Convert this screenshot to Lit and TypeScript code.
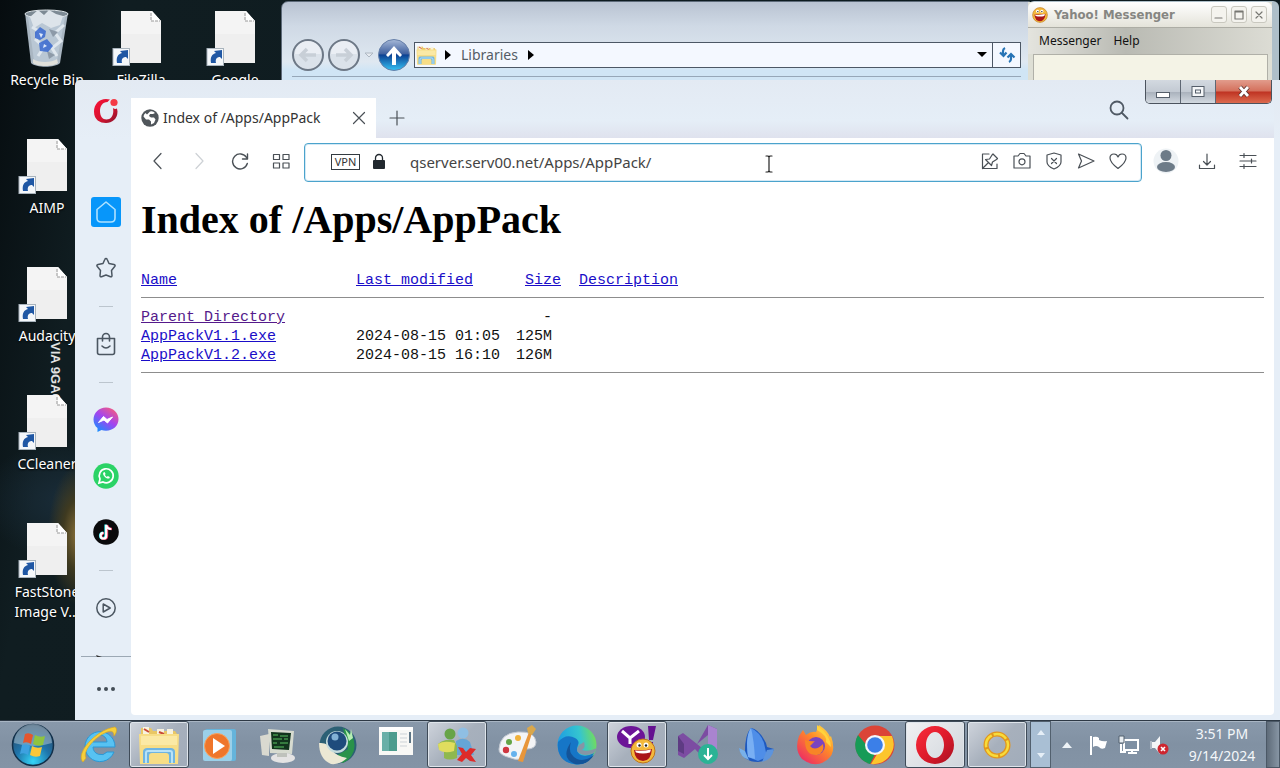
import { LitElement, html, css, svg, nothing } from "lit";
import { customElement, state } from "lit/decorators.js";
import { classMap } from "lit/directives/class-map.js";

const icon = (w: number, h: number, body: unknown, box = `0 0 ${w} ${h}`) =>
  html`<svg width=${w} height=${h} viewBox=${box} fill="none" aria-hidden="true">${body}</svg>`;

/* ---- desktop ---- */
const documentIcon = icon(60, 58, svg`
  <path d="M10 1h31l9 10v42H10z" fill="#f4f4f4"/>
  <path d="M10 24h40v29H10z" fill="#ebebeb" opacity=".6"/>
  <path d="M41 1l9 10h-9z" fill="#fff"/>
  <path d="M40 3v8h9" stroke="#999" stroke-dasharray="3 1"/>
  <rect x="2" y="38.500" width="16.500" height="17" fill="#f4f7fa" stroke="#a9b4bd"/>
  <path d="M6 53c-1-6 1-9 5-10l-2-2 8-1v9l-2-2c-3 0-5 2-4 6z" fill="#1f57a4"/>`);

const recycleBin = icon(50, 60, svg`
  <path d="M3 4l6 50c5 5 24 5 29 0l8-50z" fill="#a9b6c2"/>
  <path d="M6 8l6 44c5 4 19 4 23 0l8-44z" fill="#b9c7d4"/>
  <ellipse cx="24.500" cy="5" rx="21.500" ry="4" fill="#7d8a94" stroke="#dfe6ea"/>
  <path d="M8 8l8-7 6 5 5-5 7 4 7 2-3 9-9 3-9-5-8 5z" fill="#dde4ea"/>
  <path d="M10 18l8 5-4 8 8 7-6 9M42 16l-9 8 6 8-9 7 5 8" stroke="#dfe7ee" stroke-width="3"/>
  <path d="M27 20l9 3-5 5zM25 42l8 4-6 4z" fill="#8d9aa8"/>
  <path d="M13 23l5-5 6 4-1 6-5 3-5-2zM17 34l8-4 6 7-5 6-8-1z" fill="#3767cf" opacity=".85"/>
  <path d="M17 24l4 1-2 4zM22 35l3 2-4 2z" fill="#dce8fb"/>
  <path d="M11 50c5 4 19 4 24 0l1 4c-5 4-21 4-25 0z" fill="#e0e0da"/>`);

/* ---- explorer ---- */
const circleArrow = (d: string) => icon(32, 32, svg`
  <circle cx="16" cy="16" r="15" fill="#dbe2ea" stroke="#6d7886" stroke-width="2"/>
  <path d="M3 15a13 13 0 0 1 26 0z" fill="#f1f4f8" opacity=".7"/>
  <path d=${d} stroke="#c8cfd7" stroke-width="3.500"/>`);
const upArrow = icon(32, 32, svg`
  <defs><linearGradient id="up" x1="0" y1="0" x2="0" y2="1">
    <stop offset="0" stop-color="#a7b9d8"/><stop offset=".46" stop-color="#40619f"/>
    <stop offset=".5" stop-color="#0b4193"/><stop offset="1" stop-color="#35c3f5"/></linearGradient></defs>
  <circle cx="16" cy="16" r="15.500" fill="url(#up)" stroke="#667fa8"/>
  <path d="M16 7l8 9-2 2-4-4v12h-4V14l-4 4-2-2z" fill="#fff"/>`);
const folderArt = svg`
  <path d="M2 3h10l2 3h22l2 3v30H2z" fill="#e9c765"/>
  <path d="M4 2h6v8H4zM18 4h7v8h-7zM28 4h6v8h-6z" fill="#f8f3df"/>
  <path d="M5 4l5 3M20 7l5 2" stroke="#c94a37" stroke-width="2"/>
  <path d="M0 9h40l-1 30H1z" fill="#f7dd86"/>
  <path d="M2 11h36v9H2z" fill="#fbe9a5"/>
  <path d="M4 38V27c0-3 2-4 4-4h24c2 0 4 1 4 4v11h-6v-7c0-2-1-3-3-3H13c-2 0-3 1-3 3v7z" fill="#6fb5e2"/>
  <path d="M7 38V28c0-1 1-2 2-2h22c1 0 2 1 2 2v10" stroke="#b8e2f7" stroke-width="2"/>`;

/* ---- browser ---- */
const operaSmall = icon(26, 26, svg`
  <defs><linearGradient id="os" x1="0" y1="0" x2="1" y2="1">
    <stop offset="0" stop-color="#fb1238"/><stop offset=".6" stop-color="#d0142f"/><stop offset="1" stop-color="#85142c"/></linearGradient></defs>
  <path fill-rule="evenodd" d="M17 1.500C8 -1 1 5 1 13.500s6 11.500 12 11.500 11.500-4 11.500-11.500l-.5-3q-2 1-4-.5l.3 3c0 5-2.800 8.500-6.800 8.500s-6.500-3.500-6.500-8.500S9.500 4 14.500 4q1-1.500 2.500-2.500z" fill="url(#os)"/>
  <circle cx="21" cy="4.500" r="3.600" fill="#f43a45"/>`);
const line = (w: number, h: number, d: string, sw = 1.2, color = "#4a5056") =>
  icon(w, h, svg`<path d=${d} stroke=${color} stroke-width=${sw} stroke-linejoin="round" stroke-linecap="round"/>`);

const globe = icon(18, 18, svg`<circle cx="9" cy="9" r="8.700" fill="#50565b"/>
  <path d="M9 2.500q3-1 5 1.500l-2 1-3 0-1 2 2 1.500 3 0 1.500 2-1.500 3.500-3 1.500 0-3-2-2-3 0-2.500-3q0-2 2-3.500l1.500 1.500z" fill="#fff"/>`);
const lock = icon(14, 17, svg`<rect x="1" y="7" width="12" height="9" rx="1" fill="#22292f"/>
  <path d="M3.500 7V5a3.500 3.500 0 0 1 7 0v2" stroke="#22292f" stroke-width="1.300"/>`);
const house = line(22, 22, "M2 8.500L11 1l9 7.500V17q0 4-4 4H6q-4 0-4-4z", 1.600, "#aee2ff");
const star = line(22, 22, "M11 1.500q.8 0 1.200 1l1.800 4 5 1q1.800.5.700 2l-3.200 4 .5 5q0 1.500-1.500 1.200l-4.500-1.700-4.500 1.700q-1.500.3-1.500-1.200l.5-5-3.200-4q-1.100-1.500.7-2l5-1 1.800-4q.4-1 1.200-1z", 1.500, "#4b5661");
const bag = line(20, 24, "M1.500 6.500h17v14q0 2-2 2h-13q-2 0-2-2zM6.500 9V5a3.500 3.500 0 0 1 7 0v4M6 14q4 4 8 0", 1.600, "#4b5661");
const messenger = icon(26, 26, svg`
  <defs><linearGradient id="ms" x1=".9" y1="0" x2=".2" y2="1"><stop offset="0" stop-color="#ff5e72"/>
   <stop offset=".5" stop-color="#a344f0"/><stop offset="1" stop-color="#168fff"/></linearGradient></defs>
  <path d="M13 .5C6 .5.500 5.600.500 12.400c0 3.600 1.500 6.500 4 8.600v4l4-2q2 .8 4.500.8c7 0 12.500-5 12.500-11.500S20 .5 13 .5z" fill="url(#ms)"/>
  <path d="M5.500 15.500l5-6 3.500 3 5.500-2.500-5 6-3.500-3z" fill="#fff" stroke="#fff"/>`);
const whatsapp = icon(26, 26, svg`<circle cx="13" cy="13" r="12.700" fill="#2bd366"/>
  <path d="M6 20l1-4a7 7 0 1 1 3 3z" stroke="#fff" stroke-width="1.700"/>
  <path d="M10.500 9.500c-2 2 3.500 7.500 6 5.800l.3-1.300-2-1-1 1-2-2 .8-1-1-2z" fill="#fff"/>`);
const tiktok = icon(26, 26, svg`<circle cx="13" cy="13" r="12.800" fill="#0a0a0c"/>
  <path d="M12.500 5.500v11a2.700 2.700 0 1 1-2.700-2.700M12.500 6q1 4 5 4" stroke="#26e0e6" stroke-width="2.400"/>
  <path d="M14 6v11a2.900 2.900 0 1 1-2.900-2.900M14 6q1 4 5 4" stroke="#f43a63" stroke-width="2.400"/>
  <path d="M13.200 5.700v11a2.800 2.800 0 1 1-2.800-2.800M13.200 6q1 4 5 4" stroke="#fff" stroke-width="2.200"/>`);
const player = line(20, 20, "M10 .8a9.200 9.200 0 1 1 0 18.400a9.200 9.200 0 1 1 0-18.400zM7.200 6v8l7-4z", 1.500, "#4b5661");

const addressTools: [string, unknown][] = [
  ["Pin to board", line(18, 18, "M8 2H1.500v14.500H16V12M1.500 16.500l5.500-5.500M4.500 7.500l6 6 1-3.500 4-2.500 1-1-4.500-4.500-1 1-2.500 4z")],
  ["Snapshot", line(18, 18, "M1 4h4l2-2.500h4L13 4h4v12H1zM9 6.800a3 3 0 1 1 0 6a3 3 0 1 1 0-6z")],
  ["Ad blocker", line(18, 18, "M9 1l7 2v7q0 4-7 7-7-3-7-7V3zM6.500 6.500l5 5M11.500 6.500l-5 5")],
  ["Send to My Flow", line(18, 18, "M1.500 2L17 9 1.500 16 4.500 9z")],
  ["Bookmark", line(18, 18, "M9 16.500Q1 10.500 1 6q0-4 4-4 3 0 4 3 1-3 4-3 4 0 4 4 0 4.500-8 10.500z")],
];
const profile = icon(26, 26, svg`<circle cx="13" cy="13" r="12.500" fill="#eef2f5"/>
  <circle cx="13" cy="7.500" r="5.500" fill="#6d7b88"/><ellipse cx="13" cy="19" rx="9" ry="5" fill="#6d7b88"/>`);

/* ---- taskbar ---- */
const art = (body: unknown) => icon(42, 42, body);
const windowsOrb = icon(44, 44, svg`
  <defs><radialGradient id="orb" cx=".5" cy=".9" r=".85"><stop offset="0" stop-color="#35d5f8"/>
    <stop offset=".5" stop-color="#1f74aa"/><stop offset="1" stop-color="#2b4a68"/></radialGradient></defs>
  <circle cx="22" cy="22" r="20.500" fill="url(#orb)" stroke="#12304a" stroke-width="1.500"/>
  <path d="M3 20a19 19 0 0 1 38 0q-18 6-38 0z" fill="#b7cbd8" opacity=".5"/>
  <path d="M14 11q4-2 8 1l-2 9q-4-3-8-1z" fill="#e5562d"/><path d="M24 12q5 3 10 1l-2 9q-5 2-10-1z" fill="#8fc43f"/>
  <path d="M11 22q5-2 8 1l-2 9q-4-3-8-1z" fill="#3da1e0"/><path d="M21 23q5 3 10 1l-2 9q-5 2-10-1z" fill="#fac73a"/>`);
const ie = art(svg`
  <path fill-rule="evenodd" d="M36 28a15 15 0 1 1 1-5H15a8 8 0 0 0 14 5zM15 18h14a7 7 0 0 0-14 0z" fill="#57c2f2" stroke="#2a98d6"/>
  <path d="M5 38C-3 30 17 6 37 3c3 2 1 7-1 9 0-4-2-6-7-4C18 12 4 27 8 34z" fill="#f6cf3b" stroke="#dba91f" stroke-width=".7"/>`);
const folder = icon(42, 42, folderArt, "-1 -1 42 42");
const wmp = art(svg`<rect x="6" y="5" width="31" height="32" rx="2" fill="#65b4db"/><rect x="4" y="6" width="29" height="31" rx="2" fill="#9bd0e9"/>
  <circle cx="18" cy="22" r="12.500" fill="#ef762b" stroke="#f9a25d"/><path d="M14 14l12 8-12 8z" fill="#fff"/>`);
const pc = art(svg`<path d="M2 12l9-2v22l-7-1z" fill="#d9d9d0"/><path d="M10 5l26 2-2 23-22-1z" fill="#d7dbd0"/>
  <path d="M13 8l20 1-2 17-17-1z" fill="#11341d"/><path d="M15 11h5m2 1h8M15 15h9m2 0h4M15 19h4m3 0h8M16 23h10" stroke="#42924b" stroke-width="1.700"/>
  <ellipse cx="25" cy="34" rx="12" ry="5" fill="#e4e3e3"/><path d="M19 29h10v4H19z" fill="#bfc2bc"/>`);
const orbEye = art(svg`<circle cx="21" cy="21" r="18.500" fill="#2c6075"/><path d="M26 4a19 19 0 0 1 0 35l-9-6 14-8z" fill="#29924a"/>
  <path d="M2 19q9-1 13 7 4 6 15 8-7 7-16 6Q2 35 2 19z" fill="#ece8d4"/><circle cx="20" cy="18" r="11" fill="#c6dcdd"/>
  <circle cx="20" cy="17" r="9.500" fill="#1e4b7c"/><circle cx="18" cy="13" r="3.500" fill="#82b1d5"/><path d="M28 5l5 6 1-6 2 9-4 3z" fill="#b7efb4"/>`);
const panel = art(svg`<rect x="3" y="3" width="34" height="28" fill="#f8f8f5"/><path d="M3 3h34v3H3z" fill="#fff"/>
  <rect x="6" y="8" width="15" height="19" fill="#4c9c8d"/><path d="M6 8h7v19H6z" fill="#69afa7"/><path d="M24 10h7M24 14h7M24 18h7M24 22h7" stroke="#cdd3d7"/>
  <path d="M33 8h2v11h-2z" fill="#5d7585"/>`);
const people = art(svg`<circle cx="14" cy="10" r="5.500" fill="#67a447"/><circle cx="27" cy="9" r="5.500" fill="#8fbfe4"/>
  <path d="M20 17q8-5 14 1l4 13H20z" fill="#65a5d6"/><path d="M2 20q3-3 8-4h8l3 6v12q-8 3-13 0v-7l-5-2z" fill="#8fb84f"/><path d="M2 20q6-4 17-1l-1 8q-9 3-15-1z" fill="#e0dd5e"/>
  <path d="M22 23l5 1 3 4 4-4 6 1-5 6 5 7-6-1-4-3-4 4-5-2 5-6z" fill="#de2b2a"/>`);
const paint = art(svg`<path d="M2 25Q3 9 21 8q17-1 18 10 0 7-9 7-6 0-3 6-4 7-13 3Q1 31 2 25z" fill="#f3f4f6" stroke="#c3c9d2"/>
  <circle cx="9" cy="26" r="3.200" fill="#cf3640"/><circle cx="12" cy="18" r="3" fill="#63a447"/><circle cx="17" cy="30" r="3" fill="#66b2ed"/><circle cx="21" cy="14" r="3" fill="#f0b13a"/>
  <path d="M32 8l3 1-9 29-5-1z" fill="#e8963b"/><path d="M31 9l-1-5 5-3 4 4-4 6z" fill="#d9a74c"/>`);
const edge = art(svg`
  <defs><linearGradient id="ed" x1="0" y1=".5" x2="1" y2=".3"><stop offset="0" stop-color="#1b9be4"/><stop offset=".6" stop-color="#35c5cf"/><stop offset="1" stop-color="#75dd58"/></linearGradient></defs>
  <circle cx="21" cy="21" r="19.500" fill="url(#ed)"/>
  <path d="M2 18q8-9 17-4 5 3 3 7-3 7 3 10 6 2 13-2-5 12-18 11.500Q0 38 2 18z" fill="#1676c7"/>
  <path d="M15 18q-4 12 6 17 8 3 17-4-7 11-19 9Q4 34 15 18z" fill="#145499"/>
  <path d="M23 21q-4 6 0 8 5 4 15 0l3-5q-8 4-15 2 4-3 2-8z" fill="#8695a5"/>`);
const smile = svg`<circle cx="27" cy="27" r="12" fill="#f4b93c" stroke="#bd761c"/><circle cx="23" cy="21" r="2.500" fill="#fff"/><circle cx="30" cy="21" r="2.500" fill="#fff"/>
  <circle cx="23.500" cy="21.500" r="1.200" fill="#222"/><circle cx="30" cy="21.500" r="1.200" fill="#222"/><path d="M18 26q9 1 18-1-1 12-9 12-8 0-9-11z" fill="#a91519"/><path d="M19 26.500q8 1 16-1l-1 3q-7 2-14 0z" fill="#fff"/>`;
const yahoo = art(svg`<ellipse cx="15" cy="13" rx="14" ry="11" fill="#6c1597"/><path d="M32 2h8l-3 14h-4zM32 18h5v4h-5z" fill="#651190"/>
  <path d="M6 7l8 7v6M23 7l-9 7" stroke="#fff" stroke-width="3"/>${smile}`);
const studio = art(svg`<path d="M1 12l5-3 14 11L31 1l9 4v30l-9 4-13-14-11 9-6-3z" fill="#7c4ca2"/><path d="M31 1l9 4v30l-9 4z" fill="#a984cf"/>
  <path d="M20 20L31 11v18z" fill="#8292a4"/><path d="M1 12l6 8v10l-6-3z" fill="#5e3b83"/><circle cx="31" cy="30" r="10" fill="#2bb395"/><path d="M31 24v11m-4-4l4 4 4-4" stroke="#fff" stroke-width="2"/>`);
const fin = art(svg`<path d="M9 34Q8 11 15 4q8 1 15 15l1 4 7 2q-4 12-16 13Q7 38 3 24z" fill="#1e59bf"/>
  <path d="M12 33Q10 12 15 4q9 4 13 15l3 14-9 4z" fill="#4f8ee8"/><path d="M15 4q3 12 4 31l-7-2Q9 12 15 4z" fill="#79aff3"/><path d="M3 24l6 3 4 9Q4 33 3 24z" fill="#79b1e9"/><path d="M38 25l-7 1-5 12q10-2 12-13z" fill="#5d94dd"/>`);
const firefox = art(svg`
  <defs><linearGradient id="ff" x1="1" y1="0" x2=".2" y2="1"><stop offset="0" stop-color="#fff050"/><stop offset=".45" stop-color="#ff8b27"/><stop offset="1" stop-color="#ed2866"/></linearGradient></defs>
  <path d="M4 12l4-6 3 5q5-4 10-3l3-7q9 6 11 12l1-1q6 17-4 24-12 9-25-1Q-1 26 4 12z" fill="url(#ff)"/>
  <circle cx="21" cy="22" r="9" fill="#7b44bf"/><path d="M10 16q8 2 10 1l-5 5q5 6 13-2 2 9-6 11-12 1-12-15z" fill="#f78526"/><path d="M22 1q14 11 14 22l-5-5q2-6-9-12z" fill="#ffd33c"/>`);
const chrome = art(svg`<circle cx="21" cy="21" r="19.500" fill="#db4437"/><path d="M4 11l11 13 6 6-5 10A19.500 19.500 0 0 1 4 11z" fill="#169b57"/>
  <path d="M21 12h17q5 12-4 22-7 7-17 6l8-13z" fill="#fcc52d"/><circle cx="21" cy="21" r="10" fill="#f5f7fb"/><circle cx="21" cy="21" r="7.800" fill="#3b7fe8"/>`);
const operaLogo = art(svg`
  <defs><linearGradient id="ol" x1="0" y1="0" x2="1" y2="1"><stop offset="0" stop-color="#fa2d3d"/><stop offset=".5" stop-color="#df1b2b"/><stop offset="1" stop-color="#a71121"/></linearGradient></defs>
  <path fill-rule="evenodd" d="M21 2a19 19 0 1 1 0 38a19 19 0 1 1 0-38zm0 6c-5 0-9 6-9 13s4 13 9 13 9-6 9-13-4-13-9-13z" fill="url(#ol)"/>`);
const ring = art(svg`<circle cx="21" cy="21" r="11" stroke="#e2961e" stroke-width="5"/><circle cx="21" cy="21" r="11" stroke="#f7dc3c" stroke-width="2.500" stroke-dasharray="14 2"/>`);

const apps: { name: string; glyph: unknown; running?: boolean; front?: boolean }[] = [
  { name: "Internet Explorer", glyph: ie },
  { name: "Windows Explorer", glyph: folder, running: true },
  { name: "Windows Media Player", glyph: wmp },
  { name: "System Monitor", glyph: pc },
  { name: "Orb", glyph: orbEye },
  { name: "Program Window", glyph: panel },
  { name: "Windows Live Messenger", glyph: people, running: true },
  { name: "Paint", glyph: paint },
  { name: "Microsoft Edge", glyph: edge },
  { name: "Yahoo! Messenger", glyph: yahoo, running: true },
  { name: "Visual Studio Installer", glyph: studio },
  { name: "Wireshark", glyph: fin },
  { name: "Firefox", glyph: firefox },
  { name: "Google Chrome", glyph: chrome },
  { name: "Opera", glyph: operaLogo, running: true, front: true },
  { name: "Ring", glyph: ring, running: true },
];

const shortcutColumns = [
  ["Recycle Bin", "AIMP", "Audacity", "CCleaner", "FastStone Image V..."],
  ["FileZilla"],
  ["Google"],
];

const files = [
  { name: "Parent Directory", date: "", size: "-", visited: true },
  { name: "AppPackV1.1.exe", date: "2024-08-15 01:05", size: "125M" },
  { name: "AppPackV1.2.exe", date: "2024-08-15 16:10", size: "126M" },
];

@customElement("app-root")
export class AppRoot extends LitElement {
  @state() private address = "qserver.serv00.net/Apps/AppPack/";

  static styles = css`
    :host { display: grid; grid-template-rows: minmax(0, 1fr) 48px; height: 100vh; overflow: hidden;
      font-family: "Noto Sans", "Open Sans", sans-serif; font-size: 14px; line-height: 20px; color: #333; }
    * { box-sizing: border-box; }
    svg { display: block; flex: none; }
    button { font: inherit; color: inherit; border: 0; padding: 0; background: none; display: grid; place-items: center; }
    .desktop { position: relative; overflow: hidden;
      background: radial-gradient(ellipse 30px 70px at 78px 535px, #8a713a 0, #3f3a20 50%, transparent 100%),
        radial-gradient(ellipse 90px 60px at 70px 500px, #1a2d3a, transparent),
        linear-gradient(100deg, #060c0f, #101d21 120px, #0c1a1f); }
    .watermark { position: absolute; left: 44px; top: 342px; writing-mode: vertical-rl; color: #e2e2e2;
      font: bold 13px/22px "Liberation Sans", sans-serif; }
    .shortcuts { position: relative; display: flex; }
    .column { display: grid; grid-auto-rows: 128px; width: 94px; flex: none; list-style: none; margin: 0; padding: 0; }
    .shortcut { display: flex; flex-direction: column; align-items: center; gap: 1px; padding-top: 9px;
      color: #fff; text-decoration: none; text-align: center; text-shadow: 0 1px 2px #000; }
    .shortcut svg { height: 60px; }
    .shortcut span { width: 76px; white-space: nowrap; display: flex; justify-content: center; }
    .shortcut.wrap span { white-space: normal; display: block; }

    .explorer { position: absolute; left: 281px; right: 250px; top: 1px; height: 100px; padding: 37px 8px 0 10px;
      border: 1px solid #5d6a79; border-radius: 7px 0 0 0;
      background: linear-gradient(#b9c3d2, #cfd9e5 24px, #dfe8f1 60px, #d0e5f5 68px); }
    .nav { display: flex; align-items: center; gap: 4px; padding-bottom: 5px; border-bottom: 1px solid #96a7b8; }
    .nav .drop { width: 10px; }
    .crumbs { flex: 1; display: flex; align-items: center; gap: 10px; height: 26px; color: #555d66;
      background: #f4f8ff; border: 1px solid #4c5765; }
    .crumbs .places { margin-right: -2px; }
    .crumbs .grow { flex: 1; }
    .crumbs .refresh { width: 28px; height: 24px; border-left: 1px solid #4c5765; margin-left: -5px; }

    .chat { position: absolute; right: 1px; top: 1px; width: 251px; height: 100px; padding: 1px 7px 0 0; border-radius: 6px 6px 0 0;
      background: #aebfc9; }
    .chat-frame { height: 100%; background: #dedfd5; }
    .chat-title { display: flex; align-items: center; gap: 6px; height: 26px; padding: 0 5px 0 4px; background: linear-gradient(#fff, #e4e3da);
      border-bottom: 1px solid #adada5; border-radius: 6px 6px 0 0; }
    .chat-title h2 { flex: 1; margin: 0; font: bold 13px/20px "DejaVu Sans Condensed", "Noto Sans", sans-serif; color: #868682; }
    .chat-title button { width: 16px; height: 17px; border: 1px solid #c9c8bf; border-radius: 3px; background: #f4f3ee; margin-left: -2px; }
    .menu { display: flex; gap: 12px; height: 26px; padding: 0 11px; color: #111;
      background: linear-gradient(90deg, #e4e4de, #b9bab3 40%, #dcdcd4); }
    .menu button { font-size: 12px; line-height: 26px; }
    .chat-body { height: 45px; margin: 0 4px 0 5px; background: #f4f3e6; border: 1px solid #b0b0a8; }

    .browser { position: absolute; left: 75px; right: 0; top: 80px; bottom: 0; display: grid; grid-template-columns: 56px minmax(0, 1fr);
      border-radius: 5px 0 0 0; background: linear-gradient(#e3eaf2, #e6eef7 60px); padding: 0 6px 5px 0; }
    .rail { display: flex; flex-direction: column; align-items: center; margin-bottom: -5px; min-height: 0; }
    .rail .logo { height: 104px; padding: 18px 0 0 6px; }
    .rail button { width: 56px; height: 56px; padding-left: 6px; flex: none; }
    .rail .current span { display: grid; place-items: center; width: 30px; height: 30px; border-radius: 3px; background: #0796fa; }
    .rail hr { width: 14px; height: 1px; margin: 10px 0 9px 6px; border: 0; background: #bcc5ce; flex: none; }
    .rail .more { position: relative; width: 50px; height: 64px; padding: 0; margin: auto 0 0 6px; border-top: 1px solid #9ca8b4; }
    .rail .more .sliver { position: absolute; left: 14px; top: -2px; }

    .main { display: flex; flex-direction: column; min-width: 0; }
    .tabs { display: flex; align-items: flex-end; height: 58px; background: linear-gradient(#e3eaf3, #e5eef7 70%, #dfe2ee); }
    .tab { display: flex; align-items: center; gap: 4px; width: 245px; height: 40px; padding: 0 10px; background: #fff; }
    .tab span { flex: 1; white-space: nowrap; }
    .tabs .new { width: 41px; height: 40px; }
    .tabs .find { margin: 0 16px 18px auto; }
    .caption { display: flex; align-self: flex-start; height: 24px; margin-right: 2px; border: 1px solid #4b535e; border-top: 0; border-radius: 0 0 5px 5px; overflow: hidden; }
    .caption button { width: 35px; background: linear-gradient(#d3d9e0, #c3cad3 50%, #a9b1bc 52%, #d2d9e0); border-right: 1px solid #5e6773; }
    .caption .close { width: 55px; border: 0; background: linear-gradient(#e29c8c, #d4705c 48%, #bf3322 52%, #dc6a4e); }
    .bar { display: flex; align-items: center; height: 44px; padding: 5px 6px 0 6px; background: #fff; }
    .bar > button { width: 41px; height: 38px; padding-bottom: 3px; }
    .address { flex: 1; min-width: 0; display: flex; align-items: center; height: 39px; margin: 0 3px; padding: 0 14px 2px 26px;
      border: 1px solid #4ba3cc; border-radius: 4px; box-shadow: inset 0 0 0 1px #d4e9f5; background: #fff; }
    .address input { flex: 1; min-width: 0; border: 0; outline: 0; padding: 0; margin-left: 24px; background: none; color: #444;
      font: 15px/24px "Noto Sans", "Open Sans", sans-serif; }
    .address button { width: 18px; height: 24px; margin-left: 14px; padding-bottom: 2px; }
    .address .vpn { width: 29px; height: 16px; margin: 0 12px 0 0; padding: 0; border: 1px solid #333a40; font-size: 11px; line-height: 14px; }
    .caret { position: absolute; left: 690px; top: 75px; }

    .page { flex: 1; min-height: 0; overflow: hidden; background: #fff; padding: 14px 10px 0; border-radius: 0 0 4px 4px; color: #111; }
    h1 { margin: 0 0 27px; font: bold 40px/48px "Liberation Serif", serif; color: #000; }
    table { width: 100%; border-collapse: collapse; table-layout: fixed; font: 15px/19px "Liberation Mono", monospace; }
    th { font-weight: normal; text-align: left; padding: 0 0 7px; }
    td { padding: 0; }
    thead { border-bottom: 1px solid #8d8d8d; }
    tbody { border-bottom: 1px solid #8d8d8d; }
    tbody tr:first-child td { padding-top: 10px; }
    tbody tr:last-child td { padding-bottom: 7px; }
    .c-name { width: 215px; } .c-date { width: 160px; } .c-size { width: 45px; }
    th.size { text-align: right; }
    td.size { text-align: right; padding-right: 9px; }
    th.about { padding-left: 18px; }
    .page a { color: #1a0dc8; }
    .page a.visited { color: #551a8b; }

    .taskbar { display: flex; align-items: stretch; border-top: 1px solid #2e3945; box-shadow: inset 0 1px #a8b5c3;
      background: linear-gradient(#8999ab, #8191a3 50%, #8494a6); }
    .start { width: 69px; padding-right: 4px; }
    .app { width: 59px; height: 47px; }
    .app.running { width: 60px; margin: 0 1px; border: 1px solid #3f4b58; border-radius: 3px; box-shadow: inset 0 0 0 1px #dfe5eb;
      background: linear-gradient(135deg, #cfd4dc, #a7b0bc 50%, #a1acba); }
    .app.front { background: linear-gradient(135deg, #f0f1f3, #d0d5db); }
    .scroller { display: flex; flex-direction: column; justify-content: space-between; align-items: center; width: 21px; margin-left: 2px; padding: 8px 0 9px;
      border: 1px solid #52606e; background: #a9bfd4; }
    .tray { flex: 1; display: flex; align-items: center; justify-content: flex-end; gap: 9px; min-width: 0; }
    .tray .up { margin-right: 8px; }
    .clock { display: grid; width: 88px; justify-items: center; line-height: 22px; color: #f4f7fa; text-align: center; }
    .peek { width: 14px; height: 47px; margin-left: -9px; border: 1px solid #4b5866; background: linear-gradient(90deg, #5e6b79, #8795a4); }
  `;

  private shortcut(name: string) {
    return html`<li><a class=${classMap({ shortcut: true, wrap: name.length > 12 })} href="#">
      ${name === "Recycle Bin" ? recycleBin : documentIcon}<span>${name}</span></a></li>`;
  }

  private explorer() {
    return html`<section class="explorer" aria-label="Libraries">
      <div class="nav">
        <button aria-label="Back">${circleArrow("M24 16H10M15 10l-6 6 6 6")}</button>
        <button aria-label="Forward">${circleArrow("M8 16h14M17 10l6 6-6 6")}</button>
        <button class="drop" aria-label="Recent pages">${icon(10, 8, svg`<path d="M1 2h8L5 6z" fill="#e6ebf0" stroke="#aeb8c3"/>`)}</button>
        <button aria-label="Up">${upArrow}</button>
        <div class="crumbs">
          <span class="places">${icon(22, 20, folderArt, "-2 0 42 40")}</span>
          ${icon(6, 10, svg`<path d="M0 0l6 5-6 5z" fill="#000"/>`)}<span>Libraries</span>
          ${icon(6, 10, svg`<path d="M0 0l6 5-6 5z" fill="#000"/>`)}<span class="grow"></span>
          ${icon(10, 6, svg`<path d="M0 0h10L5 5z" fill="#000"/>`)}
          <button class="refresh" aria-label="Refresh">${icon(18, 16, svg`
            <path d="M7 1q-2 1-2 3v5M2 5.500l3.500 3.500L8.500 5.500M11 15q2-1 2-3V7M9.500 10.500L13 7l3.500 3.500" stroke="#2673b5" stroke-width="2.200"/>`)}</button>
        </div>
      </div>
    </section>`;
  }

  private chat() {
    const control = (label: string, d: string) =>
      html`<button aria-label=${label}>${line(10, 10, d, 1.2, "#777772")}</button>`;
    return html`<section class="chat" aria-label="Yahoo! Messenger">
      <div class="chat-frame">
      <div class="chat-title">${icon(16, 16, smile, "14 14 26 26")}<h2>Yahoo! Messenger</h2>
        ${control("Minimize", "M1 8h7")}${control("Maximize", "M1 1h8v8H1zM1 2h8")}${control("Close", "M2 2l6 6M8 2l-6 6")}</div>
      <div class="menu"><button>Messenger</button><button>Help</button></div>
      <div class="chat-body"></div></div>
    </section>`;
  }

  private rail() {
    return html`<nav class="rail" aria-label="Sidebar">
      <div class="logo">${operaSmall}</div>
      <button class="current" aria-label="Home"><span>${house}</span></button>
      <button aria-label="Bookmarks">${star}</button><hr />
      <button aria-label="Shopping">${bag}</button><hr />
      <button aria-label="Messenger">${messenger}</button>
      <button aria-label="WhatsApp">${whatsapp}</button>
      <button aria-label="TikTok">${tiktok}</button><hr />
      <button aria-label="Player">${player}</button>
      <button class="more" aria-label="More"><span class="sliver">${icon(8, 3, svg`<path d="M1 0l6 2H2z" fill="#333"/>`)}</span>
        ${icon(18, 4, svg`<circle cx="2" cy="2" r="2" fill="#434c55"/><circle cx="9" cy="2" r="2" fill="#434c55"/><circle cx="16" cy="2" r="2" fill="#434c55"/>`)}</button>
    </nav>`;
  }

  private listing() {
    return html`<main class="page">
      <h1>Index of /Apps/AppPack</h1>
      <table>
        <colgroup><col class="c-name" /><col class="c-date" /><col class="c-size" /><col /></colgroup>
        <thead><tr>
          <th><a href="#name">Name</a></th><th><a href="#modified">Last modified</a></th>
          <th class="size"><a href="#size">Size</a></th><th class="about"><a href="#description">Description</a></th>
        </tr></thead>
        <tbody>${files.map((f) => html`<tr>
          <td><a class=${f.visited ? "visited" : nothing} href="#${f.name}">${f.name}</a></td>
          <td>${f.date}</td><td class="size">${f.size}</td><td></td></tr>`)}</tbody>
      </table>
    </main>`;
  }

  private browser() {
    return html`<section class="browser" aria-label="Opera">
      ${this.rail()}
      <div class="main">
        <div class="tabs">
          <div class="tab">${globe}<span>Index of /Apps/AppPack</span>
            <button aria-label="Close tab">${line(14, 14, "M1.500 1.500l11 11M12.500 1.500l-11 11")}</button></div>
          <button class="new" aria-label="New tab">${line(16, 16, "M8 1v14M1 8h14")}</button>
          <button class="find" aria-label="Search tabs">${line(20, 20, "M8 1.500a6.500 6.500 0 1 1 0 13a6.500 6.500 0 1 1 0-13zM13 13l5.500 5.500", 1.800, "#4f5964")}</button>
          <div class="caption">
            <button aria-label="Minimize">${icon(16, 16, svg`<rect x="1.500" y="8.500" width="13" height="5" fill="#fff" stroke="#555e6a"/>`)}</button>
            <button aria-label="Restore">${icon(14, 14, svg`<rect x="1" y="1.500" width="12" height="10" fill="#f5f7f9" stroke="#555e6a"/><rect x="4.500" y="5" width="5" height="3" stroke="#555e6a"/>`)}</button>
            <button class="close" aria-label="Close">${icon(14, 14, svg`<path d="M3 2l8 9M11 2l-8 9" stroke="#5c3531" stroke-width="4.500"/><path d="M3 2l8 9M11 2l-8 9" stroke="#fff" stroke-width="2.800"/>`)}</button>
          </div>
        </div>
        <div class="bar">
          <button aria-label="Back">${line(18, 18, "M12 1.500L5 9l7 7.500")}</button>
          <button aria-label="Forward" disabled>${line(18, 18, "M6 1.500L13 9l-7 7.500", 1.2, "#cdd1d5")}</button>
          <button aria-label="Reload">${line(18, 18, "M15.500 5.500a7.500 7.500 0 1 0 .8 6M16.500 2v5h-5", 1.4)}</button>
          <button aria-label="Speed dial">${line(18, 18, "M1.500 2.500h6v5h-6zM11 2.500h6v5h-6zM1.500 11h6v5h-6zM11 11h6v5h-6z")}</button>
          <div class="address">
            <button class="vpn">VPN</button>${lock}
            <input type="text" aria-label="Address" .value=${this.address}
              @input=${(e: Event) => (this.address = (e.target as HTMLInputElement).value)} />
            ${addressTools.map(([label, glyph]) => html`<button aria-label=${label}>${glyph}</button>`)}
          </div>
          <button aria-label="Profile">${profile}</button>
          <button aria-label="Downloads">${line(18, 18, "M9 2v11M5.500 9.500L9 13l3.500-3.500M1.500 13v3.500h15V13")}</button>
          <button aria-label="Easy setup">${line(18, 18, "M1 3.500h16M1 9h16M1 14.500h16M5 1.500v4M12.500 7v4M5 12.500v4")}</button>
        </div>
        ${this.listing()}
      </div>
      <span class="caret">${line(8, 18, "M1 1h2l1 1 1-1h2M4 2v14M1 17h2l1-1 1 1h2", 1.2, "#222")}</span>
    </section>`;
  }

  private taskbar() {
    const tri = (d: string) => icon(8, 5, svg`<path d=${d} fill="#e6eff7"/>`);
    return html`<footer class="taskbar">
      <button class="start" aria-label="Start">${windowsOrb}</button>
      ${apps.map((a) => html`<button class=${classMap({ app: true, running: !!a.running, front: !!a.front })} aria-label=${a.name}>${a.glyph}</button>`)}
      <div class="scroller">${tri("M4 0l4 5H0z")}${tri("M4 5l4-5H0z")}</div>
      <div class="tray">
        <button class="up" aria-label="Show hidden icons">${icon(10, 6, svg`<path d="M5 0l5 6H0z" fill="#eef3f7"/>`)}</button>
        <button aria-label="Action Center">${icon(20, 20, svg`<path d="M2 1v19" stroke="#fff" stroke-width="2"/><path d="M4 2q4-1 6 1v2q4 2 8 1l-2 7q-4 2-6-1-3-2-6 0z" fill="#fff"/>`)}</button>
        <button aria-label="Network">${icon(22, 20, svg`<rect x="6" y="5" width="14" height="10" fill="#7e90a3" stroke="#fff" stroke-width="2"/><path d="M10 18h9M14 15v3M3 9v8h5" stroke="#fff" stroke-width="2"/><path d="M1 1h5v7H1z" fill="#e9eef2" stroke="#52606f"/>`)}</button>
        <button aria-label="Volume">${icon(20, 20, svg`<path d="M3 7h3l5-6v18l-5-6H3z" fill="#f4f6f8"/><path d="M2 6v8" stroke="#d9dfe5"/><circle cx="14" cy="14" r="5.500" fill="#ce2630"/><path d="M12 12l4 4m0-4l-4 4" stroke="#fff" stroke-width="1.600"/>`)}</button>
        <div class="clock"><span>3:51 PM</span><span>9/14/2024</span></div>
        <button class="peek" aria-label="Show desktop"></button>
      </div>
    </footer>`;
  }

  render() {
    return html`<div class="desktop">
        <span class="watermark">VIA 9GAG</span>
        <div class="shortcuts">${shortcutColumns.map((names) => html`<ul class="column">${names.map((n) => this.shortcut(n))}</ul>`)}</div>
        ${this.explorer()}${this.chat()}${this.browser()}
      </div>
      ${this.taskbar()}`;
  }
}
